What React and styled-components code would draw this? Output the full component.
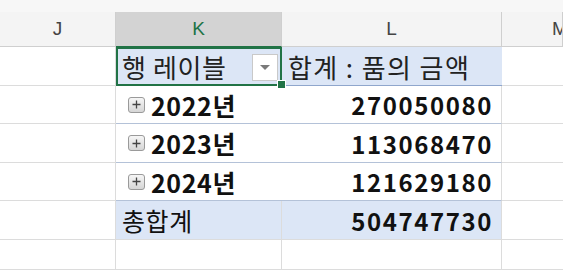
import styled, { createGlobalStyle } from "styled-components";

const GlobalStyle = createGlobalStyle`
  html, body {
    margin: 0;
    padding: 0;
    background: #ffffff;
    overflow: hidden;
  }
  body {
    font-family: "Noto Sans CJK KR", "Noto Sans", sans-serif;
  }
`;

const rows = [
  { label: "2022년", value: "270050080" },
  { label: "2023년", value: "113068470" },
  { label: "2024년", value: "121629180" },
];

const App = () => {
  return (
    <>
      <GlobalStyle />
      <Sheet>
        <TopStrip />
        <ColHeader>J</ColHeader>
        <ColHeader $selected>K</ColHeader>
        <ColHeader>L</ColHeader>
        <ColHeader $cut>M</ColHeader>

        <Cell />
        <PivotHead $selected>
          행 레이블
          <FilterButton>
            <Triangle />
          </FilterButton>
          <FillHandle />
        </PivotHead>
        <PivotHead $wide>합계 : 품의 금액</PivotHead>
        <Cell $last />

        {rows.map((r) => (
          <Row key={r.label}>
            <Cell />
            <LabelCell>
              <PlusBox>
                <svg width="11" height="11" viewBox="0 0 11 11">
                  <path d="M1.5 5.5h8M5.5 1.5v8" stroke="#444" strokeWidth="1.3" />
                </svg>
              </PlusBox>
              {r.label}
            </LabelCell>
            <ValueCell>{r.value}</ValueCell>
            <Cell $last />
          </Row>
        ))}

        <Cell />
        <TotalCell>총합계</TotalCell>
        <TotalCell $num>504747730</TotalCell>
        <Cell $last />

        <Cell />
        <Cell />
        <Cell />
        <Cell $last />
      </Sheet>
    </>
  );
};

export default App;

const Sheet = styled.div`
  display: grid;
  grid-template-columns: 116px 166px 220px 1fr;
  grid-template-rows: 12px 35px 39px 38px 39px 38px 39px 30px;
  width: 563px;
  height: 270px;
`;

const TopStrip = styled.div`
  grid-column: 1 / -1;
  background: #f7f7f7;
`;

const ColHeader = styled.div`
  display: flex;
  align-items: center;
  justify-content: ${(p) => (p.$cut ? "flex-start" : "center")};
  padding-left: ${(p) => (p.$cut ? "50px" : "0")};
  overflow: hidden;
  background: ${(p) => (p.$selected ? "#d3d3d3" : "#f4f4f4")};
  color: ${(p) => (p.$selected ? "#217346" : "#444")};
  border-right: 1px solid #cfcfcf;
  border-bottom: 1px solid ${(p) => (p.$selected ? "#217346" : "#cfcfcf")};
  font-family: "Liberation Sans", Arial, sans-serif;
  font-size: 19px;
  box-sizing: border-box;
`;

const Cell = styled.div`
  border-bottom: 1px solid #dcdcdc;
  border-right: ${(p) => (p.$last ? "none" : "1px solid #dcdcdc")};
  box-sizing: border-box;
`;

const Row = styled.div`
  display: contents;
`;

const PivotHead = styled.div`
  position: relative;
  display: flex;
  align-items: center;
  padding-left: 6px;
  background: #dce6f6;
  border-bottom: 1px solid #8fa6cc;
  font-size: 26px;
  color: #222;
  letter-spacing: ${(p) => (p.$wide ? "1.4px" : "0.6px")};
  white-space: nowrap;
  box-sizing: border-box;
  outline: ${(p) => (p.$selected ? "2px solid #217346" : "none")};
  outline-offset: -2px;
`;

const FilterButton = styled.div`
  position: absolute;
  right: 4px;
  top: 7px;
  width: 26px;
  height: 27px;
  background: #ffffff;
  border: 1px solid #c9c9c9;
  display: flex;
  align-items: center;
  justify-content: center;
  box-sizing: border-box;
`;

const Triangle = styled.div`
  width: 0;
  height: 0;
  border-left: 5px solid transparent;
  border-right: 5px solid transparent;
  border-top: 5px solid #7a7a7a;
`;

const FillHandle = styled.div`
  position: absolute;
  right: -4px;
  bottom: -4px;
  width: 7px;
  height: 7px;
  background: #217346;
  border: 1px solid #ffffff;
  z-index: 2;
`;

const LabelCell = styled.div`
  display: flex;
  align-items: center;
  gap: 6px;
  padding-left: 12px;
  border-bottom: 1px solid #b4c2d8;
  font-size: 25px;
  font-weight: 600;
  color: #111;
  letter-spacing: 0.6px;
  box-sizing: border-box;
`;

const PlusBox = styled.span`
  flex-shrink: 0;
  display: inline-flex;
  align-items: center;
  justify-content: center;
  width: 17px;
  height: 16px;
  border: 1px solid #9a9a9a;
  border-radius: 3px;
  background: linear-gradient(#f6f6f6, #d6d6d6);
  box-sizing: border-box;
`;

const ValueCell = styled.div`
  display: flex;
  align-items: center;
  justify-content: flex-end;
  padding-right: 8px;
  border-bottom: 1px solid #b4c2d8;
  border-right: 1px solid #dcdcdc;
  font-size: 24px;
  font-weight: 600;
  color: #111;
  letter-spacing: 1.6px;
  box-sizing: border-box;
`;

const TotalCell = styled.div`
  display: flex;
  align-items: center;
  justify-content: ${(p) => (p.$num ? "flex-end" : "flex-start")};
  padding: ${(p) => (p.$num ? "0 8px 0 0" : "0 0 0 6px")};
  background: #dce6f6;
  font-size: ${(p) => (p.$num ? "24px" : "25px")};
  font-weight: ${(p) => (p.$num ? 600 : 400)};
  letter-spacing: ${(p) => (p.$num ? "1.6px" : "0.6px")};
  color: #111;
  border-bottom: 1px solid #dcdcdc;
  border-right: 1px solid #dcdcdc;
  box-sizing: border-box;
`;
